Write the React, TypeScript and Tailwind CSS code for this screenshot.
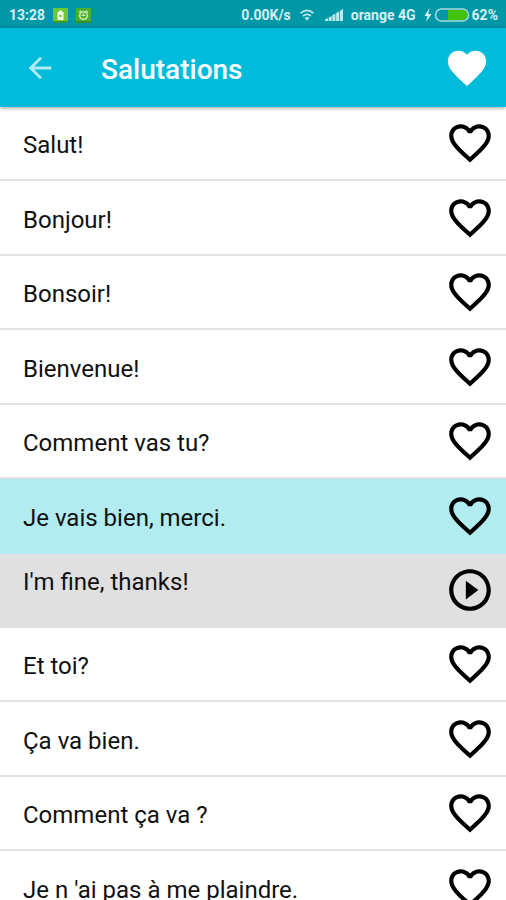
import { useState } from 'react'
import { MdArrowBack, MdFavorite, MdFavoriteBorder, MdPlayCircleOutline } from 'react-icons/md'

type Phrase = { text: string; translation?: string }

const phrases: Phrase[] = [
  { text: 'Salut!' },
  { text: 'Bonjour!' },
  { text: 'Bonsoir!' },
  { text: 'Bienvenue!' },
  { text: 'Comment vas tu?' },
  { text: 'Je vais bien, merci.', translation: "I'm fine, thanks!" },
  { text: 'Et toi?' },
  { text: 'Ça va bien.' },
  { text: 'Comment ça va ?' },
  { text: "Je n 'ai pas à me plaindre." },
]

function BatteryBadge() {
  return (
    <svg viewBox="0 0 15 15" className="size-[15px]" aria-hidden="true">
      <rect width="15" height="15" rx="1" fill="#6cc832" />
      <rect y="13" width="15" height="2" fill="#3c9a2c" />
      <path d="M6 2.5h3v1.5h1.5v8h-6v-8H6z" fill="#f2fbe9" />
      <rect x="6.5" y="7" width="2" height="2" fill="#5fc02c" />
    </svg>
  )
}

function AlarmBadge() {
  return (
    <svg viewBox="0 0 15 15" className="size-[15px]" aria-hidden="true">
      <rect width="15" height="15" rx="1" fill="#4caf32" />
      <rect y="13" width="15" height="2" fill="#38902c" />
      <circle cx="7.5" cy="7.5" r="3.8" fill="none" stroke="#c9ecb4" strokeWidth="1.5" />
      <path d="M3 4.2 5 2.6M12 4.2 10 2.6M5.5 7.5h4M7.5 5.5v2" stroke="#c9ecb4" strokeWidth="1.2" />
    </svg>
  )
}

function WifiIcon() {
  return (
    <svg viewBox="0 0 16 14" className="h-[14px] w-4" fill="none" stroke="#bfe8ec" strokeWidth="1.7" aria-hidden="true">
      <path d="M1.5 5.2Q8 -.6 14.5 5.2M4 8Q8 4.6 12 8" />
      <path d="M5.6 9.8Q8 8 10.4 9.8L8 12.8z" fill="#bfe8ec" stroke="none" />
    </svg>
  )
}

function SignalIcon() {
  return (
    <svg viewBox="0 0 18 12" className="h-3 w-[18px]" fill="#bfe8ec" aria-hidden="true">
      <path d="M0 12v-1.500L3 9v3zM3.700 12V8.500L6.700 7v5zM7.400 12V6l3-1.500V12zM11.100 12V4l3-1.500V12zM14.800 12V2L18 0v12z" />
    </svg>
  )
}

function ChargingIcon() {
  return (
    <svg viewBox="0 0 46 16" className="h-4 w-[46px]" aria-hidden="true">
      <path d="M5.5 1 .5 9h3L2 15l5.500-8H4.300z" fill="#d5f1f4" />
      <path d="M24 3h14.500a5 5 0 0 1 0 10H24z" fill="#43c30b" />
      <rect x="11.500" y="2" width="33" height="12" rx="6" fill="none" stroke="#a9d9d9" strokeWidth="1.600" />
    </svg>
  )
}

function StatusBar() {
  return (
    <div className="flex h-7 shrink-0 items-center justify-between bg-[#0097a7] pt-0.5 pr-2 pl-[9px] text-[14px] font-bold text-[#d5f1f4]">
      <div className="flex items-center gap-2">
        <span>13:28</span>
        <BatteryBadge />
        <AlarmBadge />
      </div>
      <div className="flex items-center gap-2">
        <span>0.00K/s</span>
        <div className="flex items-center gap-2.5">
          <WifiIcon />
          <SignalIcon />
        </div>
        <span>orange 4G</span>
        <div className="flex items-center gap-0.5">
          <ChargingIcon />
          <span>62%</span>
        </div>
      </div>
    </div>
  )
}

export default function App() {
  const [favorites, setFavorites] = useState<string[]>([])
  const [selected, setSelected] = useState('Je vais bien, merci.')

  const toggleFavorite = (text: string) => {
    setFavorites(prev => (prev.includes(text) ? prev.filter(t => t !== text) : [...prev, text]))
  }

  return (
    <div className="flex h-screen flex-col overflow-hidden bg-white font-['Roboto',sans-serif] text-[#111]">
      <StatusBar />

      <header className="z-10 flex h-[79px] shrink-0 items-center bg-[#00bcda] pr-4 pl-[23px] text-white shadow-[0_1px_4px_rgba(0,0,0,0.4)]">
        <button type="button" aria-label="Retour" className="text-white/70">
          <MdArrowBack className="size-[34px]" />
        </button>
        <h1 className="ml-11 flex-1 pt-1 text-[28px] leading-8 font-medium">Salutations</h1>
        <button type="button" aria-label="Favoris">
          <MdFavorite className="size-[46px]" />
        </button>
      </header>

      <ul className="min-h-0 flex-1 overflow-hidden">
        {phrases.map(({ text, translation }) => {
          const open = selected === text && translation
          return (
            <li key={text} className="group">
              <div
                className={`flex items-center border-b-2 pr-[11px] pl-[23px] group-odd:h-[74px] group-even:h-[75px] ${
                  open ? 'border-[#b2ebf0] bg-[#b2ebf0]' : 'border-[#e2e2e2]'
                }`}
              >
                <button
                  type="button"
                  onClick={() => setSelected(text)}
                  className="flex-1 pt-1 text-left text-[24px] leading-6"
                >
                  {text}
                </button>
                <button
                  type="button"
                  aria-label={`Ajouter « ${text} » aux favoris`}
                  aria-pressed={favorites.includes(text)}
                  onClick={() => toggleFavorite(text)}
                  className="text-black"
                >
                  {favorites.includes(text) ? (
                    <MdFavorite className="size-[50px]" />
                  ) : (
                    <MdFavoriteBorder className="size-[50px]" />
                  )}
                </button>
              </div>
              {open && (
                <div className="flex h-[74px] items-center bg-[#e0e0e0] pr-[11px] pb-0.5 pl-[23px]">
                  <p className="flex-1 pb-4 text-[24px] leading-6">{translation}</p>
                  <button type="button" aria-label="Écouter" className="text-black">
                    <MdPlayCircleOutline className="size-[50px]" />
                  </button>
                </div>
              )}
            </li>
          )
        })}
      </ul>
    </div>
  )
}
